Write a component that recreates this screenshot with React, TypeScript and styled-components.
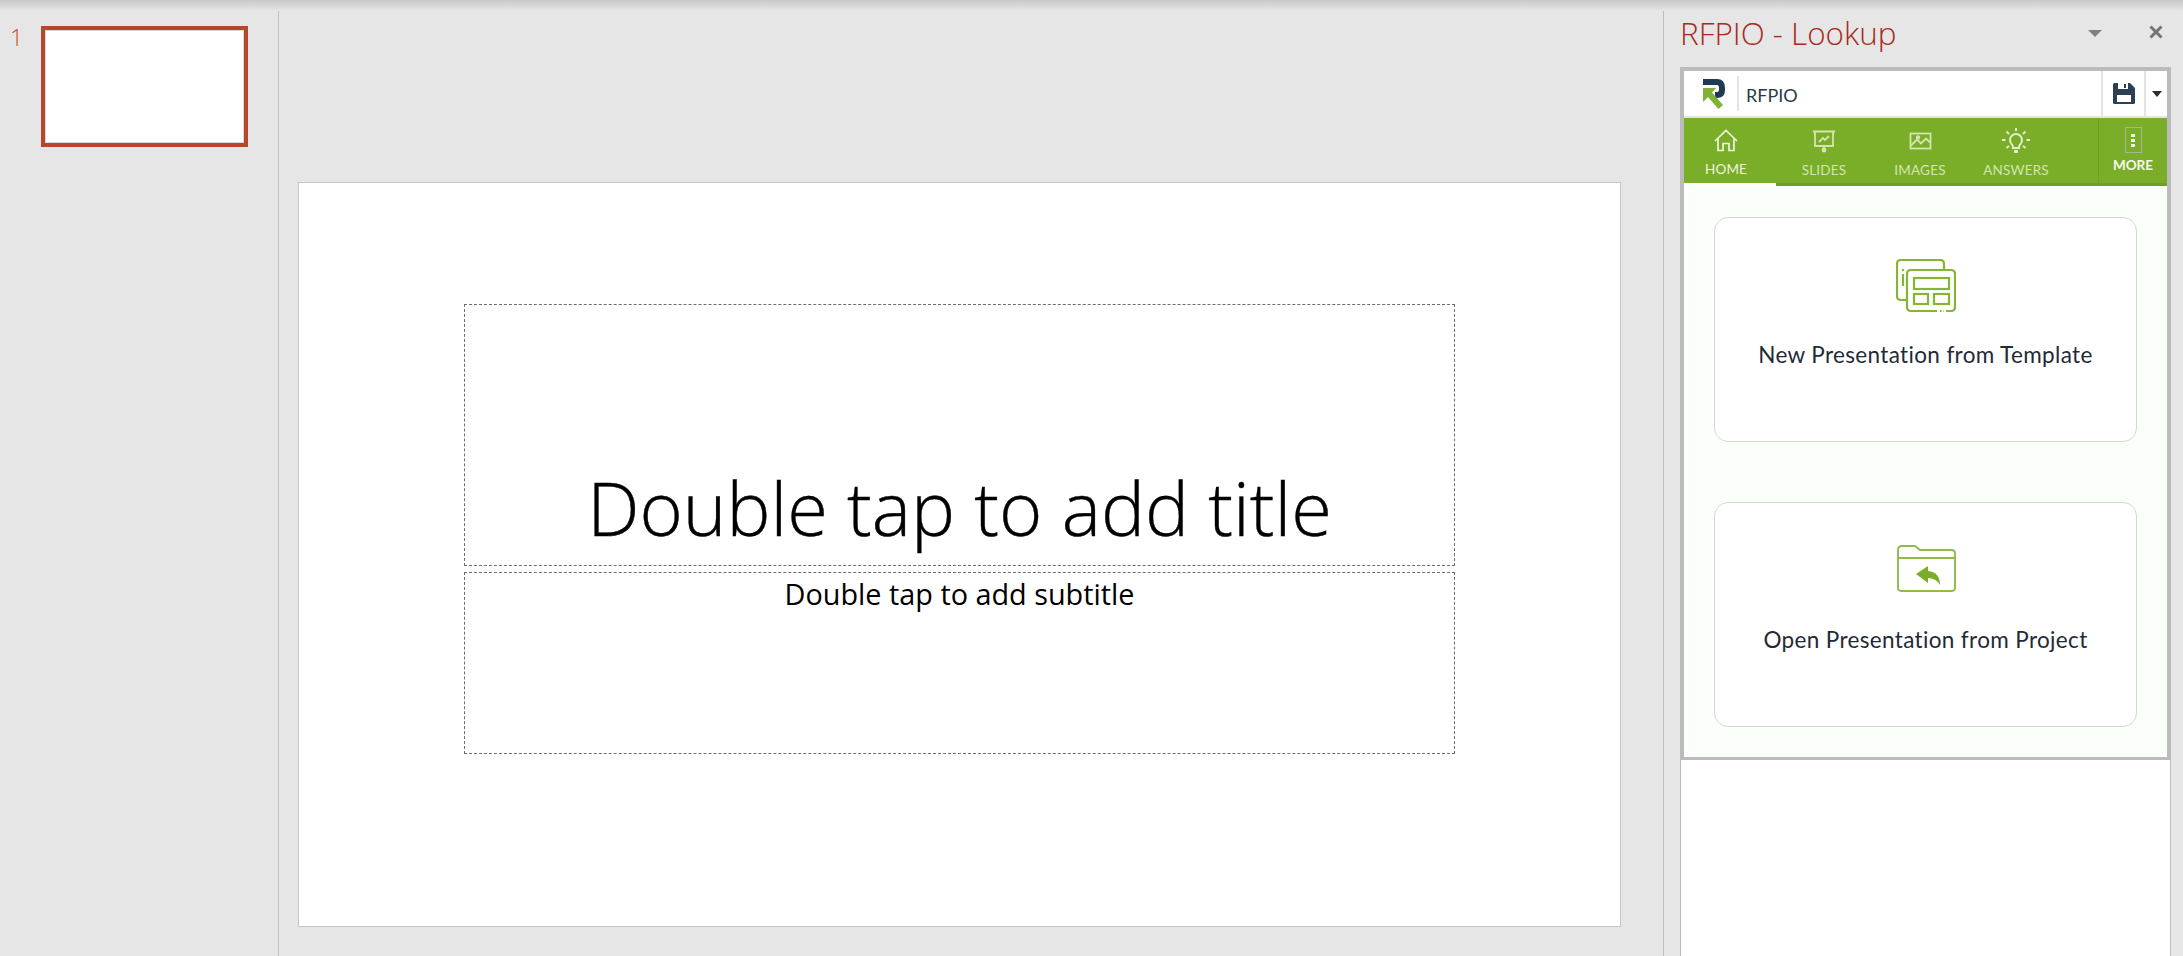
import React from 'react';
import styled, {createGlobalStyle} from 'styled-components';

const GlobalStyle = createGlobalStyle`
  html, body {
    margin: 0;
    padding: 0;
    height: 100%;
    background: #e6e6e6;
    font-family: "Open Sans", "Liberation Sans", sans-serif;
  }
  #root {
    height: 100%;
  }
`;

const Page = styled.div`
  position: relative;
  display: flex;
  width: 2183px;
  height: 956px;
  overflow: hidden;
  background: #e6e6e6;
`;

const TopShadow = styled.div`
  position: absolute;
  top: 0;
  left: 0;
  right: 0;
  height: 11px;
  background: linear-gradient(#c9c9c9, #e6e6e6);
`;

/* thumbnails */
const ThumbPane = styled.div`
  box-sizing: border-box;
  width: 279px;
  flex: none;
  display: flex;
  align-items: flex-start;
  padding: 24px 0 0 10px;
  border-right: 1px solid #bebebe;
`;

const ThumbNumber = styled.span`
  width: 31px;
  font-size: 23px;
  line-height: 26px;
  font-weight: 300;
  color: #d24726;
`;

const Thumb = styled.div`
  box-sizing: border-box;
  width: 207px;
  height: 121px;
  margin-top: 2px;
  background: #fff;
  border: 4px solid #b7472a;
  box-shadow: inset 0 0 0 1px #d8d8d8;
`;

/* slide editing area */
const Editor = styled.div`
  box-sizing: border-box;
  width: 1385px;
  flex: none;
  padding: 182px 0 0 19px;
  border-right: 1px solid #bebebe;
`;

const Slide = styled.div`
  box-sizing: border-box;
  width: 1323px;
  height: 745px;
  background: #fff;
  border: 1px solid #c6c6c6;
  display: flex;
  flex-direction: column;
  align-items: center;
  gap: 6px;
  padding-top: 121px;
`;

const Placeholder = styled.div<{$h: number; $bottom?: boolean}>`
  box-sizing: border-box;
  width: 991px;
  height: ${p => p.$h}px;
  border: 1px dashed #6e6e6e;
  display: flex;
  justify-content: center;
  align-items: ${p => (p.$bottom ? 'flex-end' : 'flex-start')};
  color: #000;
  white-space: nowrap;
`;

const TitleText = styled.span`
  font-size: 74px;
  font-weight: 300;
  line-height: 88px;
  margin-bottom: 13px;
  -webkit-text-stroke: 0.4px #000;
`;

const SubtitleText = styled.span`
  font-size: 28.800px;
  line-height: 40px;
  margin-top: 1px;
`;

/* task pane */
const TaskPane = styled.div`
  flex: 1;
  display: flex;
  flex-direction: column;
  padding-left: 16px;
`;

const PaneHeader = styled.div`
  box-sizing: border-box;
  width: 503px;
  height: 67px;
  flex: none;
  display: flex;
  align-items: flex-start;
  padding-top: 13px;
`;

const PaneTitle = styled.div`
  flex: 1;
  font-size: 31.400px;
  line-height: 40px;
  font-weight: 300;
  color: #a92a1c;
`;

const PaneCaret = styled.div`
  width: 0;
  height: 0;
  margin: 17px 47px 0 0;
  border-left: 7px solid transparent;
  border-right: 7px solid transparent;
  border-top: 7px solid #808080;
`;

const PaneClose = styled.svg`
  width: 14px;
  height: 14px;
  margin: 12px 20px 0 0;
`;

const PaneBody = styled.div`
  box-sizing: border-box;
  width: 491px;
  flex: 1;
  background: #fff;
  border-left: 1px solid #bbb;
  border-right: 1px solid #bbb;
`;

const Frame = styled.div`
  box-sizing: border-box;
  width: 491px;
  margin-left: -1px;
  border: 4px solid #bbb;
  border-bottom-width: 3px;
  font-family: Lato, "Open Sans", sans-serif;
`;

const AddinBar = styled.div`
  height: 47px;
  box-sizing: border-box;
  display: flex;
  align-items: stretch;
  background: #fff;
  border-bottom: 2px solid #e4e4e4;
`;

const LogoCell = styled.div`
  width: 53px;
  flex: none;
  display: flex;
  align-items: center;
  padding-left: 19px;
  box-sizing: border-box;
`;

const AddinName = styled.div`
  flex: 1;
  margin: 5px 0 5px;
  padding-left: 7px;
  border-left: 2px solid #e4e4e4;
  font-size: 18px;
  line-height: 38px;
  color: #2a3a4a;
`;

const SaveCell = styled.div<{$w: number}>`
  width: ${p => p.$w}px;
  flex: none;
  display: flex;
  align-items: center;
  justify-content: center;
  border-left: 2px solid #e4e4e4;
  box-sizing: border-box;
`;

const SmallCaret = styled.div`
  width: 0;
  height: 0;
  border-left: 5px solid transparent;
  border-right: 5px solid transparent;
  border-top: 6px solid #2b2b2b;
`;

const NavBar = styled.div`
  height: 68px;
  display: flex;
  background: #7aae29;
  border-bottom: 3px solid #6f9e25;
  box-sizing: border-box;
`;

const Tab = styled.div<{$active?: boolean}>`
  box-sizing: border-box;
  width: ${p => (p.$active ? 92 : 96)}px;
  height: 68px;
  flex: none;
  display: flex;
  flex-direction: column;
  align-items: center;
  padding: ${p => (p.$active ? '10px 8px 0 0' : '10px 0 0')};
  color: ${p => (p.$active ? '#edf5de' : '#d3e5b1')};
  border-bottom: 3px solid ${p => (p.$active ? '#fff' : 'transparent')};
`;

const TabIcon = styled.svg`
  width: 26px;
  height: 26px;
  flex: none;
  overflow: visible;
`;

const TabLabel = styled.span<{$active?: boolean}>`
  margin-top: ${p => (p.$active ? 6 : 7)}px;
  font-size: 13.500px;
  line-height: 18px;
  letter-spacing: 0.2px;
`;

const MoreTab = styled.div`
  box-sizing: border-box;
  width: 69px;
  flex: none;
  margin-left: auto;
  display: flex;
  flex-direction: column;
  align-items: center;
  padding-top: 9px;
  border-left: 1px solid #6f9e25;
`;

const MoreBox = styled.div`
  box-sizing: border-box;
  width: 17px;
  height: 26px;
  border: 1px solid #a8b79a;
  display: flex;
  flex-direction: column;
  align-items: center;
  justify-content: center;
  gap: 2px;
`;

const MoreDot = styled.i`
  width: 4px;
  height: 3px;
  background: #f4f8e8;
`;

const MoreLabel = styled.span`
  margin-top: 3px;
  font-size: 13.500px;
  line-height: 18px;
  font-weight: 700;
  color: #f5f9ec;
`;

const CardList = styled.div`
  display: flex;
  flex-direction: column;
  gap: 60px;
  padding: 31px 30px 30px;
  background: #fbfffa;
`;

const Card = styled.div`
  box-sizing: border-box;
  height: 225px;
  display: flex;
  flex-direction: column;
  align-items: center;
  padding-top: 41px;
  background: #fff;
  border: 1px solid #d6d6d6;
  border-radius: 14px;
`;

const CardIcon = styled.svg`
  width: 60px;
  height: 54px;
  flex: none;
`;

const CardLabel = styled.div`
  margin-top: 28px;
  font-size: 22.500px;
  line-height: 28px;
  letter-spacing: 0.35px;
  color: #1f2a37;
  white-space: nowrap;
`;

const Logo = () => (
  <svg width="22" height="30" viewBox="0 0 22 30">
    <path d="M0 3H14Q19 3 19 9V11Q19 16 14 16H12" fill="none" stroke="#1f3a52" strokeWidth="6" />
    <path d="M0 9H13L9 13.500L20 26L15.500 30L5 18L0 23Z" fill="#7fb237" />
  </svg>
);

const SaveIcon = () => (
  <svg width="22" height="21" viewBox="0 0 22 21">
    <path d="M0 1.500Q0 0 1.500 0H17L22 5V19.500Q22 21 20.500 21H1.500Q0 21 0 19.500Z" fill="#2b3f55" />
    <rect x="5" y="0" width="10" height="6" fill="#fff" />
    <rect x="11" y="1" width="2" height="4" fill="#2b3f55" />
    <rect x="4" y="12" width="14" height="7" fill="#fff" />
  </svg>
);

const TemplateIcon = () => (
  <CardIcon viewBox="0 0 60 54" fill="none" stroke="#84b535" strokeWidth="2.200">
    <path d="M11 41H5Q1 41 1 37V5Q1 1 5 1H44Q48 1 48 5V11" />
    <path d="M7 10V12M7 15V27" />
    <path d="M41 52H15Q11 52 11 48V15Q11 11 15 11H55Q59 11 59 15V48Q59 52 55 52H50" />
    <path d="M44 52H45.500M47.500 52H48" />
    <rect x="18" y="19" width="35" height="11" />
    <rect x="18" y="35" width="14" height="10" />
    <rect x="38" y="35" width="15" height="10" />
  </CardIcon>
);

const FolderIcon = () => (
  <CardIcon viewBox="0 0 60 54" fill="none" stroke="#8fbb47" strokeWidth="1.900">
    <path d="M2 44V6Q2 2 6 2H19L24 6H55Q59 6 59 9V44Q59 47 55 47H6Q2 47 2 44Z" />
    <path d="M2 14H59" />
    <path d="M20 30L32 22V27Q44 28 44 41Q40 34 32 34V39Z" fill="#7aae29" stroke="none" />
  </CardIcon>
);

const App = () => {
  return (
    <>
      <GlobalStyle />
      <Page>
        <ThumbPane>
          <ThumbNumber>1</ThumbNumber>
          <Thumb />
        </ThumbPane>
        <Editor>
          <Slide>
            <Placeholder $h={262} $bottom>
              <TitleText>Double tap to add title</TitleText>
            </Placeholder>
            <Placeholder $h={182}>
              <SubtitleText>Double tap to add subtitle</SubtitleText>
            </Placeholder>
          </Slide>
        </Editor>
        <TaskPane>
          <PaneHeader>
            <PaneTitle>RFPIO - Lookup</PaneTitle>
            <PaneCaret />
            <PaneClose viewBox="0 0 14 14">
              <path d="M1.500 1.500L12.500 12.500M12.500 1.500L1.500 12.500" stroke="#737373" strokeWidth="3" />
            </PaneClose>
          </PaneHeader>
          <PaneBody>
            <Frame>
              <AddinBar>
                <LogoCell>
                  <Logo />
                </LogoCell>
                <AddinName>RFPIO</AddinName>
                <SaveCell $w={43}>
                  <SaveIcon />
                </SaveCell>
                <SaveCell $w={23}>
                  <SmallCaret />
                </SaveCell>
              </AddinBar>
              <NavBar>
                <Tab $active>
                  <TabIcon viewBox="0 0 26 26" fill="none" stroke="currentColor" strokeWidth="1.700">
                    <path d="M2 13L13 2.500L24 13M5 11V22.500H10V15.500H16V22.500H21V11" />
                  </TabIcon>
                  <TabLabel $active>HOME</TabLabel>
                </Tab>
                <Tab>
                  <TabIcon viewBox="0 0 26 26" fill="none" stroke="currentColor" strokeWidth="1.800">
                    <path d="M2 3.500H24M4 3.500V18H22V3.500M13 18V21" />
                    <circle cx="13" cy="22" r="1.500" fill="currentColor" />
                    <path d="M8 14L12 10L14 12L18 8" />
                  </TabIcon>
                  <TabLabel>SLIDES</TabLabel>
                </Tab>
                <Tab>
                  <TabIcon viewBox="0 0 26 26" fill="none" stroke="currentColor" strokeWidth="1.800">
                    <rect x="3.500" y="5.500" width="20" height="15" />
                    <path d="M4 17.500L10 11.500L14 15.500L19 10.500L23 14.500" />
                    <circle cx="11" cy="9.500" r="1.300" fill="currentColor" />
                  </TabIcon>
                  <TabLabel>IMAGES</TabLabel>
                </Tab>
                <Tab>
                  <TabIcon viewBox="0 0 26 26" fill="none" stroke="#e2eecb" strokeWidth="2">
                    <path d="M10 20Q10 17 8.500 16Q7 14 7 12A6 6 0 0 1 19 12Q19 14 17.500 16Q16 17 16 20Z" />
                    <path d="M11 23.500H15" strokeWidth="3" />
                    <path d="M13 0V3M3.500 3.500L6 6M22.500 3.500L20 6M-1 12H2.500M23.500 12H27M3.500 20L6 18M22.500 20L20 18" />
                  </TabIcon>
                  <TabLabel>ANSWERS</TabLabel>
                </Tab>
                <MoreTab>
                  <MoreBox>
                    <MoreDot />
                    <MoreDot />
                    <MoreDot />
                  </MoreBox>
                  <MoreLabel>MORE</MoreLabel>
                </MoreTab>
              </NavBar>
              <CardList>
                <Card>
                  <TemplateIcon />
                  <CardLabel>New Presentation from Template</CardLabel>
                </Card>
                <Card>
                  <FolderIcon />
                  <CardLabel>Open Presentation from Project</CardLabel>
                </Card>
              </CardList>
            </Frame>
          </PaneBody>
        </TaskPane>
        <TopShadow />
      </Page>
    </>
  );
};

export default App;
